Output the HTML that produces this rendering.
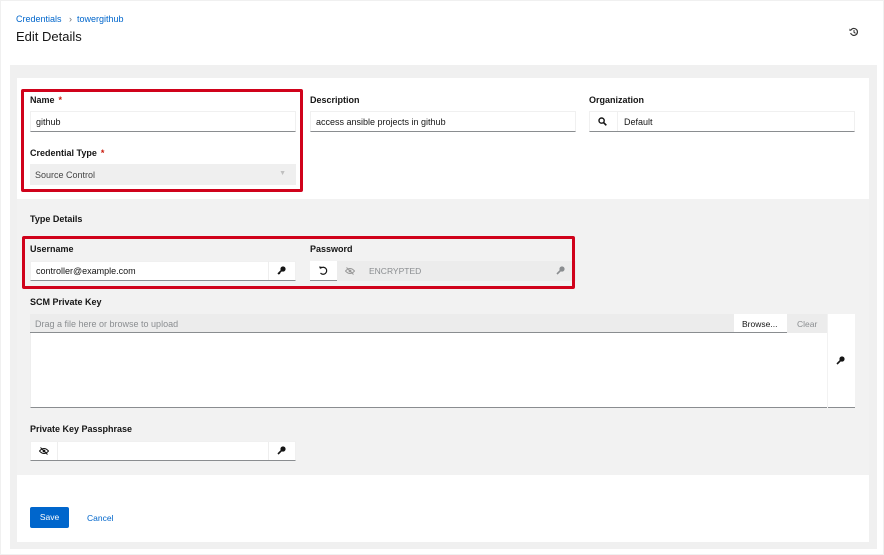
<!DOCTYPE html>
<html><head><style>
*{box-sizing:border-box;margin:0;padding:0}
body{width:884px;height:555px;background:#fff;font-family:"Liberation Sans",sans-serif;position:relative;overflow:hidden;color:#151515}
.a{position:absolute}
.lbl{position:absolute;font-size:9px;font-weight:bold;color:#151515}
.req{color:#c9190b;margin-left:4px}
.inp{position:absolute;background:#fff;border:1px solid #f0f0f0;border-bottom:1px solid #8a8d90;font-size:9px;color:#151515;padding-left:5px;display:flex;align-items:center}
.red{position:absolute;border:3px solid #d0021b;border-radius:2px}
</style></head><body>
<div class="a" style="left:0;top:0;width:884px;height:555px;border:1px solid #f0f0f0"></div>
<div class="a" style="left:16px;top:14px;font-size:9px;color:#0066cc">Credentials <span style="color:#6a6e73;margin:0 5px">›</span>towergithub</div>
<div class="a" style="left:16px;top:29px;font-size:13px;color:#151515;font-weight:500">Edit Details</div>
<svg class="a" style="left:849px;top:27px" width="10" height="10" viewBox="0 0 10 10"><path d="M2 3 A3.5 3.5 0 1 1 1.6 6" fill="none" stroke="#333" stroke-width="1.2"/><path d="M0.5 1.5 L2.5 3.5 L0.5 4 Z" fill="#333"/><path d="M5 3 V5.3 L6.5 6.3" fill="none" stroke="#333" stroke-width="1"/></svg>
<div class="a" style="left:10px;top:65px;width:867px;height:484px;background:#f0f0f0"></div>
<div class="a" style="left:17px;top:78px;width:852px;height:464px;background:#fff"></div>
<div class="a" style="left:17px;top:199px;width:852px;height:276px;background:#f2f2f2"></div>

<div class="lbl" style="left:30px;top:95px">Name<span class="req">*</span></div>
<div class="inp" style="left:30px;top:111px;width:266px;height:21px">github</div>
<div class="lbl" style="left:30px;top:148px">Credential Type<span class="req">*</span></div>
<div class="a" style="left:30px;top:164px;width:266px;height:21px;background:#efefef;font-size:9px;color:#444;padding:6px 5px">Source Control<span style="position:absolute;right:10px;top:6px;color:#c0c0c0;font-size:7px">▼</span></div>
<div class="red" style="left:21px;top:89px;width:282px;height:103px"></div>

<div class="lbl" style="left:310px;top:95px">Description</div>
<div class="inp" style="left:310px;top:111px;width:266px;height:21px">access ansible projects in github</div>
<div class="lbl" style="left:589px;top:95px">Organization</div>
<div class="inp" style="left:589px;top:111px;width:266px;height:21px;padding-left:34px">Default</div>
<svg class="a" style="left:598px;top:117px" width="9" height="9" viewBox="0 0 9 9"><circle cx="3.6" cy="3.6" r="2.6" fill="none" stroke="#151515" stroke-width="1.4"/><path d="M5.5 5.5 L8.3 8.3" stroke="#151515" stroke-width="1.6"/></svg>
<div class="a" style="left:617px;top:112px;width:1px;height:19px;background:#f0f0f0"></div>

<div class="lbl" style="left:30px;top:214px">Type Details</div>
<div class="lbl" style="left:30px;top:244px">Username</div>
<div class="inp" style="left:30px;top:261px;width:266px;height:20px">controller@example.com</div>
<div class="a" style="left:268px;top:261px;width:1px;height:19px;background:#eee"></div>
<svg class="a" style="left:277px;top:266px" width="9" height="9" viewBox="0 0 9 9"><circle cx="6" cy="3" r="2.6" fill="#151515"/><path d="M5 4 L1 8" stroke="#151515" stroke-width="1.6"/><path d="M1.8 6.8 L3 8" stroke="#151515" stroke-width="1"/></svg>
<div class="lbl" style="left:310px;top:244px">Password</div>
<div class="a" style="left:310px;top:261px;width:266px;height:20px;background:#ececec"></div>
<div class="a" style="left:310px;top:261px;width:27px;height:20px;background:#fff;border-bottom:1px solid #8a8d90"></div>
<svg class="a" style="left:318px;top:265px" width="11" height="11" viewBox="0 0 11 11"><path d="M3 3 A3.5 3.5 0 1 1 2.5 8" fill="none" stroke="#151515" stroke-width="1.2"/><path d="M1 1.5 L3.8 1.8 L2.2 4.2 Z" fill="#151515"/></svg>
<svg class="a" style="left:345px;top:267px" width="10" height="8" viewBox="0 0 10 8"><path d="M0.5 4 Q5 -1 9.5 4 Q5 9 0.5 4Z" fill="none" stroke="#999" stroke-width="1"/><circle cx="5" cy="4" r="1.4" fill="#999"/><path d="M1.5 0.5 L8.5 7.5" stroke="#999" stroke-width="1"/></svg>
<div class="a" style="left:369px;top:266px;font-size:8.5px;color:#8a8d90">ENCRYPTED</div>
<svg class="a" style="left:556px;top:266px" width="9" height="9" viewBox="0 0 9 9"><circle cx="6" cy="3" r="2.6" fill="#8a8d90"/><path d="M5 4 L1 8" stroke="#8a8d90" stroke-width="1.6"/></svg>
<div class="red" style="left:22px;top:236px;width:553px;height:53px"></div>

<div class="lbl" style="left:30px;top:297px">SCM Private Key</div>
<div class="a" style="left:30px;top:314px;width:704px;height:19px;background:#ececec;border-bottom:1px solid #8a8d90;font-size:9px;color:#8a8d90;padding:5px 5px">Drag a file here or browse to upload</div>
<div class="a" style="left:734px;top:314px;width:53px;height:19px;background:#fff;border-bottom:1px solid #8a8d90;font-size:8.5px;color:#151515;padding:5px 8px">Browse...</div>
<div class="a" style="left:787px;top:314px;width:40px;height:19px;background:#ececec;font-size:8.5px;color:#8a8d90;padding:5px 10px">Clear</div>
<div class="a" style="left:30px;top:333px;width:797px;height:75px;background:#fff;border-bottom:1px solid #8a8d90;border-left:1px solid #eee"></div>
<div class="a" style="left:828px;top:314px;width:27px;height:94px;background:#fff;border-bottom:1px solid #8a8d90"></div>
<svg class="a" style="left:836px;top:356px" width="9" height="9" viewBox="0 0 9 9"><circle cx="6" cy="3" r="2.6" fill="#151515"/><path d="M5 4 L1 8" stroke="#151515" stroke-width="1.6"/></svg>

<div class="lbl" style="left:30px;top:424px">Private Key Passphrase</div>
<div class="inp" style="left:30px;top:441px;width:266px;height:20px"></div>
<div class="a" style="left:57px;top:442px;width:1px;height:18px;background:#eee"></div>
<div class="a" style="left:268px;top:442px;width:1px;height:18px;background:#eee"></div>
<svg class="a" style="left:39px;top:447px" width="10" height="8" viewBox="0 0 10 8"><path d="M0.5 4 Q5 -1 9.5 4 Q5 9 0.5 4Z" fill="none" stroke="#151515" stroke-width="1"/><circle cx="5" cy="4" r="1.4" fill="#151515"/><path d="M1.5 0.5 L8.5 7.5" stroke="#151515" stroke-width="1"/></svg>
<svg class="a" style="left:277px;top:446px" width="9" height="9" viewBox="0 0 9 9"><circle cx="6" cy="3" r="2.6" fill="#151515"/><path d="M5 4 L1 8" stroke="#151515" stroke-width="1.6"/></svg>

<div class="a" style="left:30px;top:507px;width:39px;height:21px;background:#0066cc;border-radius:2px;color:#fff;font-size:8.5px;text-align:center;line-height:21px">Save</div>
<div class="a" style="left:87px;top:513px;font-size:8.5px;color:#0066cc">Cancel</div>
</body></html>
